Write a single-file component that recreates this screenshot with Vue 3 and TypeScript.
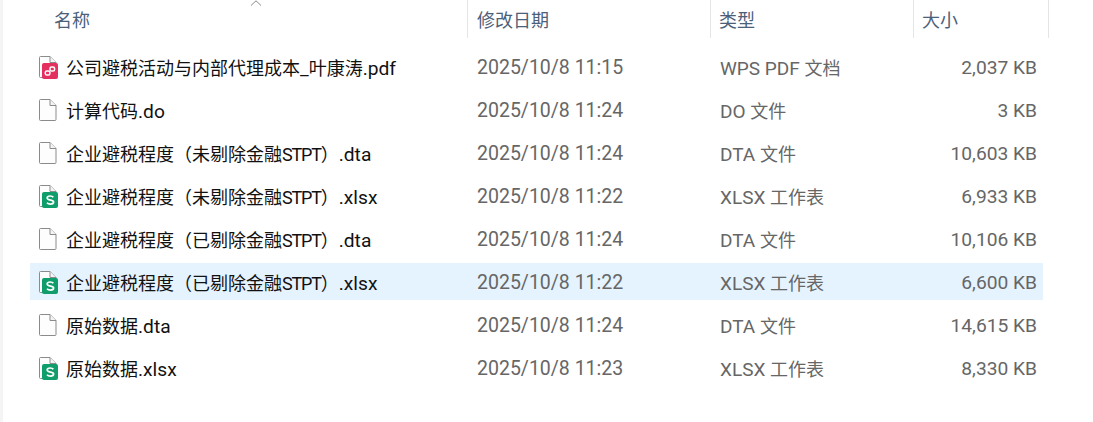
<script setup lang="ts">
type Kind = 'pdf' | 'blank' | 'sheet'
interface Row { name: string; date: string; type: string; size: string; kind: Kind; selected?: boolean }
const rows: Row[] = [
  { name: '公司避税活动与内部代理成本_叶康涛.pdf', date: '2025/10/8 11:15', type: 'WPS PDF 文档', size: '2,037 KB', kind: 'pdf' },
  { name: '计算代码.do', date: '2025/10/8 11:24', type: 'DO 文件', size: '3 KB', kind: 'blank' },
  { name: '企业避税程度（未剔除金融STPT）.dta', date: '2025/10/8 11:24', type: 'DTA 文件', size: '10,603 KB', kind: 'blank' },
  { name: '企业避税程度（未剔除金融STPT）.xlsx', date: '2025/10/8 11:22', type: 'XLSX 工作表', size: '6,933 KB', kind: 'sheet' },
  { name: '企业避税程度（已剔除金融STPT）.dta', date: '2025/10/8 11:24', type: 'DTA 文件', size: '10,106 KB', kind: 'blank' },
  { name: '企业避税程度（已剔除金融STPT）.xlsx', date: '2025/10/8 11:22', type: 'XLSX 工作表', size: '6,600 KB', kind: 'sheet', selected: true },
  { name: '原始数据.dta', date: '2025/10/8 11:24', type: 'DTA 文件', size: '14,615 KB', kind: 'blank' },
  { name: '原始数据.xlsx', date: '2025/10/8 11:23', type: 'XLSX 工作表', size: '8,330 KB', kind: 'sheet' },
]
// Latin runs are set larger than CJK runs, as in the reference's mixed-script rendering.
const parts = (s: string) =>
  (s.match(/[A-Z]+|[\x00-\x7f]+|[^\x00-\x7f]+/g) ?? []).map((t) => ({
    t,
    lat: /^[\x00-\x7f]/.test(t),
    caps: /^[A-Z]+$/.test(t),
  }))
</script>

<template>
  <div class="page">
    <div class="explorer">
      <header class="head">
        <div class="hcell hname">名称
          <svg class="sort" width="12" height="6" viewBox="0 0 12 6"><path d="M1 5.500 6 .8l5 4.700" fill="none" stroke="#8a8a8a" stroke-width="1" /></svg>
        </div>
        <div class="hcell hdate">修改日期</div>
        <div class="hcell htype">类型</div>
        <div class="hcell hsize">大小</div>
      </header>
      <ul class="list">
        <li v-for="r in rows" :key="r.name" class="row" :class="{ selected: r.selected }">
          <div class="cname">
            <svg class="icon" width="20" height="24" viewBox="0 0 20 24">
              <path d="M1.500 2.500a1 1 0 0 1 1-1H12l6 6v14a1 1 0 0 1-1 1H2.500a1 1 0 0 1-1-1z" fill="#fdfdfd" stroke="#8b8b8b" stroke-width="1" />
              <path d="M12 1.500V7.500h6" fill="#f4f4f4" stroke="#8b8b8b" stroke-width="1" />
              <template v-if="r.kind === 'pdf'">
                <rect x="4" y="8" width="16" height="16" rx="2" fill="#e4305f" />
                <rect x="7.300" y="16" width="4.600" height="4" rx="1.600" fill="none" stroke="#fff" stroke-width="1.500" />
                <rect x="12" y="12" width="4.600" height="4" rx="1.600" fill="none" stroke="#fff" stroke-width="1.500" />
              </template>
              <template v-else-if="r.kind === 'sheet'">
                <rect x="4" y="8" width="16" height="16" rx="2" fill="#0f9d6b" />
                <path d="M15.300 13.300c-.6-.9-1.800-1.300-3.100-1.300-1.800 0-3 .8-3 2 0 2.900 6.400 1.500 6.400 4.100 0 1.300-1.400 2-3.200 2-1.400 0-2.700-.5-3.400-1.400" fill="none" stroke="#fff" stroke-width="1.700" />
              </template>
            </svg>
            <span class="fname"><span v-for="(p, i) in parts(r.name)" :key="i" :class="{ lat: p.lat, caps: p.caps }">{{ p.t }}</span></span>
          </div>
          <div class="cell cdate">{{ r.date }}</div>
          <div class="cell ctype"><span v-for="(p, i) in parts(r.type)" :key="i" :class="{ lat: p.lat }">{{ p.t }}</span></div>
          <div class="cell csize">{{ r.size }}</div>
        </li>
      </ul>
    </div>
  </div>
</template>

<style>
html, body { margin: 0; background: #fff; }
</style>

<style scoped>
.page {
  width: 1093px;
  height: 422px;
  overflow: hidden;
  box-sizing: border-box;
  border-left: 3px solid #f4f4f4;
  background: #fff;
  font-family: "Roboto", "Noto Sans CJK SC", sans-serif;
  font-size: 18px;
}
.head {
  display: flex;
  height: 38px;
  margin-left: 27px;
  color: #4c607a;
  font-family: "Noto Sans CJK SC", sans-serif;
}
.hcell {
  box-sizing: border-box;
  height: 38px;
  line-height: 39px;
  padding-left: 9px;
  border-right: 1px solid #e5e5e5;
  position: relative;
}
.hname { width: 438px; padding-left: 24px; }
.hdate { width: 243px; }
.htype { width: 203px; padding-left: 8px; }
.hsize { width: 135px; padding-left: 8px; }
.sort { position: absolute; left: 220px; top: 0; }
.list { list-style: none; margin: 10px 0 0 27px; padding: 0; display: flex; flex-direction: column; gap: 6px; width: 1013px; }
.row { display: flex; align-items: center; height: 37px; }
.row.selected { background: #e5f3ff; }
.cname { width: 447px; display: flex; align-items: center; padding-left: 8px; box-sizing: border-box; color: #111; gap: 8px; }
.icon { flex: none; }
.fname { white-space: nowrap; }
.lat { font-size: 19.200px; }
.fname .caps { font-size: 18px; letter-spacing: -1.200px; }
.cell { color: #666; }
.cdate { width: 243px; font-size: 19.500px; padding-top: 2px; }
.ctype { width: 203px; }
.ctype .lat { font-size: 19px; }
.csize { width: 114px; text-align: right; font-size: 19.200px; padding-top: 2px; }
</style>
